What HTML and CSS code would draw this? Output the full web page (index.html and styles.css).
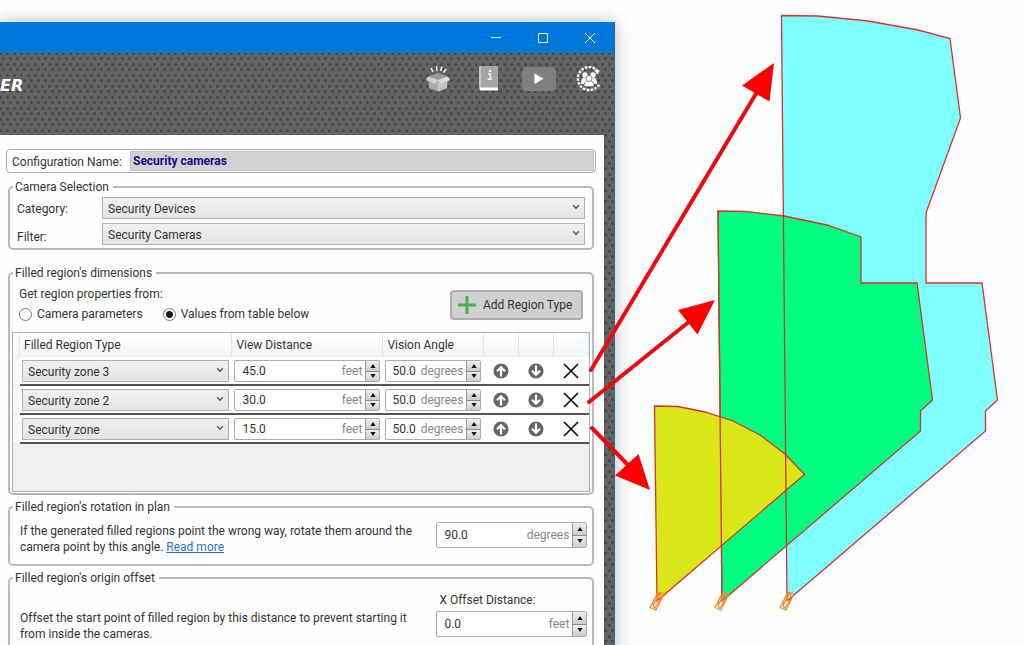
FILE: index.html
```html
<!DOCTYPE html>
<html lang="en">
<head>
<meta charset="utf-8">
<meta name="viewport" content="width=device-width, initial-scale=1">
<title>Security cameras</title>
<link rel="stylesheet" href="styles.css">
</head>
<body>
<svg class="defs" aria-hidden="true">
  <symbol id="chevron" viewBox="0 0 8 6"><path d="M1.2 1.2 4 4.2 6.8 1.2" fill="none" stroke="#555" stroke-width="1.3"/></symbol>
  <symbol id="up" viewBox="0 0 8 6"><path d="M4 1 6.6 5H1.4Z" fill="#111"/></symbol>
  <symbol id="down" viewBox="0 0 8 6"><path d="M4 5 6.6 1H1.4Z" fill="#111"/></symbol>
  <symbol id="move" viewBox="0 0 16 16"><circle cx="8" cy="8" r="7.6" fill="#666"/><path d="M8 13.5V4.5M4 8.3 8 4.3 12 8.3" fill="none" stroke="#fff" stroke-width="2.2"/></symbol>
  <symbol id="cross" viewBox="0 0 16 16"><path d="M1 1 15 15M15 1 1 15" stroke="#111" stroke-width="1.7"/></symbol>
</svg>
<main class="stage">
  <section class="window">
    <header class="titlebar">
      <button aria-label="Minimize"><svg viewBox="0 0 10 10"><path d="M0 4.5H10"/></svg></button>
      <button aria-label="Maximize"><svg viewBox="0 0 10 10"><path d="M.5.5H9.5V9.5H.5Z"/></svg></button>
      <button aria-label="Close"><svg viewBox="0 0 10 10"><path d="M0 0 10 10M10 0 0 10"/></svg></button>
    </header>
    <div class="body">
      <div class="banner">
        <span class="brand">ER</span>
        <nav class="tools">
          <button class="news" aria-label="What's new"><svg width="24" height="26" viewBox="0 0 24 26">
            <path d="M5 2 7 6M10.500 0 11 5M16 .5 14.500 5M20 3 17.500 6.500" stroke="#eee" stroke-width="1.6"/>
            <path d="M2 11 12 8 22 11 21 22 12 25.500 3 22Z" fill="#aaa"/>
            <path d="M12 14V25.500L21 22V12Z" fill="#c4c4c4"/>
            <path d="M12 7 22 10.500 12 14 2 10.500Z" fill="#999"/>
            <path d="M2 10.500 12 14 9 18 0 14Z" fill="#d0d0d0"/><path d="M22 10.500 12 14 15 18 24 14Z" fill="#dadada"/>
          </svg></button>
          <button class="help" aria-label="Help"><svg width="20" height="26" viewBox="0 0 20 26">
            <path d="M2 0H19V25H2Q0 25 0 22V2Q0 0 2 0Z" fill="#a6a6a6"/><path d="M0 2Q0 0 2 0V21H0Z" fill="#c6c6c6"/>
            <path d="M1 21.500H19V24H1Z" fill="#fff"/><circle cx="11" cy="5" r="1.300" fill="#eee"/><path d="M9 8H11.300V13M8.500 13.300H13" fill="none" stroke="#eee" stroke-width="1.500"/>
          </svg></button>
          <button class="video" aria-label="Video"><svg width="34" height="26" viewBox="0 0 34 26">
            <rect y="1" width="34" height="24" rx="5" fill="#808080"/><path d="M12.500 7.500V18L21.500 12.700Z" fill="#fff"/>
          </svg></button>
          <button aria-label="Community"><svg width="26" height="26" viewBox="0 0 26 26">
            <path d="M22 5A11.500 11.500 0 1 0 23.500 18" fill="none" stroke="#fff" stroke-width="2.400" stroke-dasharray="2.600 1.300"/>
            <path d="M18 3.500 24 4.500 21 8.500Z" fill="#fff"/>
            <g fill="#fff"><circle cx="9" cy="9" r="2.700"/><circle cx="17" cy="9" r="2.700"/><path d="M5 18Q5 11 9 11.500L12 14V18ZM21 18Q21 11 17 11.500L14 14V18Z"/></g>
            <g fill="#fff" stroke="#666" stroke-width=".8"><path d="M8 20.500Q8 14.500 13 14.500T18 20.500Z"/><circle cx="13" cy="12.500" r="3"/></g>
          </svg></button>
        </nav>
      </div>
      <form class="panel">
        <div class="config"><label for="cfg">Configuration Name:</label><input id="cfg" value="Security cameras"></div>

        <fieldset class="selection">
          <legend>Camera Selection</legend>
          <label for="cat">Category:</label>
          <span class="pick"><select id="cat"><option>Security Devices</option></select><svg><use href="#chevron"/></svg></span>
          <label for="fil" class="low">Filter:</label>
          <span class="pick"><select id="fil"><option>Security Cameras</option></select><svg><use href="#chevron"/></svg></span>
        </fieldset>

        <fieldset class="dimensions">
          <legend>Filled region's dimensions</legend>
          <div class="source">
            <div>
              <p>Get region properties from:</p>
              <div class="radios">
                <label><input type="radio" name="src">Camera parameters</label>
                <label><input type="radio" name="src" checked>Values from table below</label>
              </div>
            </div>
            <button type="button" class="add"><svg viewBox="0 0 18 18"><path d="M9 0V18M0 9H18" stroke="#4caf50" stroke-width="3"/></svg>Add Region Type</button>
          </div>
          <div class="grid">
            <table>
              <colgroup><col class="c-lead"><col><col class="c-view"><col class="c-angle"><col class="c-icon"><col class="c-icon"><col class="c-icon"></colgroup>
              <thead><tr><th></th><th>Filled Region Type</th><th>View Distance</th><th>Vision Angle</th><th></th><th></th><th></th></tr></thead>
              <tbody>
                <tr><td></td>
                  <td><span class="pick"><select aria-label="Region type 1"><option>Security zone 3</option></select><svg><use href="#chevron"/></svg></span></td>
                  <td><span class="spin"><input aria-label="View distance 1" value="45.0"><span>feet</span><span class="steps"><button type="button" aria-label="Increase"><svg><use href="#up"/></svg></button><button type="button" aria-label="Decrease"><svg><use href="#down"/></svg></button></span></span></td>
                  <td><span class="spin tight"><input aria-label="Vision angle 1" value="50.0"><span>degrees</span><span class="steps"><button type="button" aria-label="Increase"><svg><use href="#up"/></svg></button><button type="button" aria-label="Decrease"><svg><use href="#down"/></svg></button></span></span></td>
                  <td><button type="button" class="act" aria-label="Move up"><svg><use href="#move"/></svg></button></td>
                  <td><button type="button" class="act flip" aria-label="Move down"><svg><use href="#move"/></svg></button></td>
                  <td><button type="button" class="act" aria-label="Delete"><svg><use href="#cross"/></svg></button></td></tr>
                <tr><td></td>
                  <td><span class="pick"><select aria-label="Region type 2"><option>Security zone 2</option></select><svg><use href="#chevron"/></svg></span></td>
                  <td><span class="spin"><input aria-label="View distance 2" value="30.0"><span>feet</span><span class="steps"><button type="button" aria-label="Increase"><svg><use href="#up"/></svg></button><button type="button" aria-label="Decrease"><svg><use href="#down"/></svg></button></span></span></td>
                  <td><span class="spin tight"><input aria-label="Vision angle 2" value="50.0"><span>degrees</span><span class="steps"><button type="button" aria-label="Increase"><svg><use href="#up"/></svg></button><button type="button" aria-label="Decrease"><svg><use href="#down"/></svg></button></span></span></td>
                  <td><button type="button" class="act" aria-label="Move up"><svg><use href="#move"/></svg></button></td>
                  <td><button type="button" class="act flip" aria-label="Move down"><svg><use href="#move"/></svg></button></td>
                  <td><button type="button" class="act" aria-label="Delete"><svg><use href="#cross"/></svg></button></td></tr>
                <tr><td></td>
                  <td><span class="pick"><select aria-label="Region type 3"><option>Security zone</option></select><svg><use href="#chevron"/></svg></span></td>
                  <td><span class="spin"><input aria-label="View distance 3" value="15.0"><span>feet</span><span class="steps"><button type="button" aria-label="Increase"><svg><use href="#up"/></svg></button><button type="button" aria-label="Decrease"><svg><use href="#down"/></svg></button></span></span></td>
                  <td><span class="spin tight"><input aria-label="Vision angle 3" value="50.0"><span>degrees</span><span class="steps"><button type="button" aria-label="Increase"><svg><use href="#up"/></svg></button><button type="button" aria-label="Decrease"><svg><use href="#down"/></svg></button></span></span></td>
                  <td><button type="button" class="act" aria-label="Move up"><svg><use href="#move"/></svg></button></td>
                  <td><button type="button" class="act flip" aria-label="Move down"><svg><use href="#move"/></svg></button></td>
                  <td><button type="button" class="act" aria-label="Delete"><svg><use href="#cross"/></svg></button></td></tr>
              </tbody>
            </table>
          </div>
        </fieldset>

        <fieldset class="rotation">
          <legend>Filled region's rotation in plan</legend>
          <p>If the generated filled regions point the wrong way, rotate them around the camera point by this angle. <a href="#more">Read more</a></p>
          <span class="spin tall"><input aria-label="Rotation" value="90.0"><span>degrees</span><span class="steps"><button type="button" aria-label="Increase"><svg><use href="#up"/></svg></button><button type="button" aria-label="Decrease"><svg><use href="#down"/></svg></button></span></span>
        </fieldset>

        <fieldset class="offset">
          <legend>Filled region's origin offset</legend>
          <p>Offset the start point of filled region by this distance to prevent starting it from inside the cameras.</p>
          <div>
            <label for="xoff">X Offset Distance:</label>
            <span class="spin tall"><input id="xoff" value="0.0"><span>feet</span><span class="steps"><button type="button" aria-label="Increase"><svg><use href="#up"/></svg></button><button type="button" aria-label="Decrease"><svg><use href="#down"/></svg></button></span></span>
          </div>
        </fieldset>
      </form>
    </div>
  </section>

  <svg class="plan" viewBox="0 0 1024 645" preserveAspectRatio="xMinYMin meet" role="img" aria-label="Filled regions in plan">
    <path fill="#80ffff" d="M781.500 15.500 818 16 868 21 918 30 950 38.500 960.500 118 926 213V283H982L997.500 400 985.500 411V431L787 601Z"/>
    <path class="edge" fill="#00ff80" d="M718 211 745 211.500 784 216 827 225 861 237V283H917L932.500 400 920.500 411V431L722 601Z"/>
    <path class="edge" fill="#dbe61a" d="M654.500 406 678 406.500 705 412 733 421 760 435 785 454 804.500 474.500 657 601Z"/>
    <g class="line">
      <path d="M787 601 781.500 15.500 818 16 868 21 918 30 950 38.500 960.500 118 926 213"/>
      <path d="M926 213V283H982L997.500 400 985.500 411V431L787 601"/>
      <path d="M718 211 722 601"/>
    </g>
    <g fill="none" stroke="#f5862a" stroke-width="1.200">
      <path id="cam" d="M658 592 664 594 656 610 650 607.500ZM653 606 659 593 662 597 655 608ZM651 605 657 600 661 601M656 600 661 592"/>
      <use href="#cam" x="65"/><use href="#cam" x="130"/>
    </g>
    <g stroke="#eb0a0f" stroke-width="4" stroke-linecap="round"><path d="M591 370 757 92M589 402 690 321M592 428 628 465"/></g>
    <path fill="#f00" d="M774 63 742 85.500 769.500 101.500ZM715 300 678 310 697.500 334.500ZM650 490 615 475.500 638.500 454Z"/>
  </svg>
</main>
</body>
</html>
```

FILE: styles.css
```css
* { box-sizing: border-box; }
body { margin: 0; background: #fefefe; color: #333; font: 12px/16px Roboto, "Open Sans", sans-serif; }
button, input, select { font: inherit; color: inherit; margin: 0; }
p { margin: 0; }
.defs { display: none; }
.stage { position: relative; min-height: 100vh; height: 100vh; overflow: hidden; padding-top: 22px; }
.window { width: calc(60% + 1px); min-height: 100%; border-right: 1px solid #1670b8; box-shadow: 0 0 16px rgba(0,0,0,.28); }

.titlebar { height: 31px; padding-right: 1px; background: #0078d9; display: flex; justify-content: flex-end; }
.titlebar button { width: 47px; border: 0; background: none; padding: 0; display: grid; place-items: center; }
.titlebar svg { width: 10px; height: 10px; fill: none; stroke: #fff; stroke-width: 1; overflow: visible; }

.body {
  padding-right: 10px;
  background-color: #636363;
  background-image: radial-gradient(circle, #484848 1px, transparent 2px), radial-gradient(circle, #484848 1px, transparent 2px);
  background-size: 7px 11px;
  background-position: 0 0, 4px 6px;
}
.banner { height: 82px; display: flex; justify-content: space-between; }
.brand { margin-top: 24px; font: italic bold 16px/18px "DejaVu Sans", sans-serif; color: #fff; }
.tools { display: flex; align-items: flex-start; padding: 13px 2px 0 0; }
.tools button { border: 0; background: none; padding: 0; display: block; }
.tools .news { margin-right: 29px; }
.tools .help { margin-right: 23px; }
.tools .video { margin-right: 20px; }
.tools svg { display: block; }

.panel { background: #fefefe; padding: 14px 8px 0 6px; min-height: 520px; }
.config { display: flex; align-items: stretch; height: 24px; border: 1px solid #aaa; border-radius: 4px; padding: 1px; }
.config label { width: 122px; padding-left: 4px; line-height: 22px; }
.config input { flex: 1; min-width: 0; border: 1px solid #c0c0c0; background: #d2d2d2; color: #10108a; font-weight: bold; padding: 0 2px; }

fieldset { margin: 0 2px; padding: 0; border: 2px solid #b9b9b9; border-radius: 5px; min-width: 0; }
legend { padding: 0 4px 0 2px; }

.pick { position: relative; display: block; }
.pick select { appearance: none; display: block; width: 100%; height: 22px; border: 1px solid #b0b0b0; border-radius: 0; padding: 1px 20px 0 5px; background: linear-gradient(#f0f0f0, #e4e4e4); }
.pick svg { position: absolute; right: 5px; top: 7px; width: 8px; height: 6px; pointer-events: none; }

.selection { margin-top: 6px; padding: 2px 7px 3px 7px; display: grid; grid-template-columns: 85px 1fr; row-gap: 4px; align-items: center; }
.selection legend { margin-left: -4px; }
.selection label { padding-top: 2px; }
.selection .low { padding-top: 6px; }

.dimensions { margin-top: 15px; padding: 3px 2px 1px; }
.dimensions legend { margin-left: 1px; }
.source { display: flex; justify-content: space-between; padding: 0 7px; height: 48px; line-height: 20px; }
.radios { display: flex; gap: 20px; }
.radios label { display: flex; align-items: center; gap: 5px; }
.radios input { appearance: none; width: 13px; height: 13px; border: 1px solid #777; border-radius: 50%; background: #fff; }
.radios input:checked { background: radial-gradient(circle, #1a1a1a 3px, #fff 4px); }
.add { display: flex; align-items: center; gap: 7px; height: 30px; margin-top: 6px; padding: 0 9px 0 6px; border: 2px solid #adadad; border-radius: 4px; background: #d0d0d0; }
.add svg { width: 18px; height: 18px; }

.grid { border: 1px solid #9fb4c4; background: #efefef; height: 160px; }
table { width: 100%; border-collapse: separate; border-spacing: 0; table-layout: fixed; }
.c-lead { width: 7px; }
.c-view { width: 151px; }
.c-angle { width: 101px; }
.c-icon { width: 35px; }
th { height: 24px; padding: 0 4px; font-weight: normal; text-align: left; white-space: nowrap; background: linear-gradient(#fff, #f2f5f8); border-right: 1px solid #dde4ea; }
td { height: 29px; padding: 2px 3px 1px 2px; background: #fff; border-bottom: 2px solid #555; vertical-align: middle; }
td:first-child { background: #f8f8f8; border-bottom: 1px solid #e4e4e4; padding: 0; }

.spin { display: flex; height: 22px; border: 1px solid #aaa; border-radius: 2px; background: #fff; color: #888; line-height: 21px; }
.spin input { flex: 1; min-width: 0; width: 40px; border: 0; padding: 1px 0 0 7px; background: none; color: #333; }
.spin.tight input { padding-left: 6px; }
.spin > span { padding-right: 3px; }
.spin .steps { display: flex; flex-direction: column; width: 14px; padding: 0; border-left: 1px solid #999; }
.steps button { flex: 1; min-height: 0; padding: 0; border: 0; background: linear-gradient(#eee, #ccc); display: grid; place-items: center; }
.steps button + button { border-top: 1px solid #888; }
.steps svg { width: 8px; height: 6px; }
.spin.tall { width: 151px; height: 26px; line-height: 25px; }
.act { display: block; margin: 0 auto; padding: 0; border: 0; background: none; }
.act svg { display: block; width: 16px; height: 16px; }
.flip { transform: rotate(180deg); }

.rotation, .offset { display: flex; justify-content: space-between; gap: 10px; margin-top: 4px; padding: 7px 5px 9px 10px; }
.rotation legend, .offset legend { margin-left: -7px; }
.rotation p, .offset p { flex: 1; max-width: 406px; }
.rotation p { padding-top: 1px; }
.rotation a { color: #2a72c4; }
.offset { padding-top: 6px; min-height: 90px; }
.offset p { padding-top: 18px; }
.offset label { display: block; padding-left: 3px; margin-bottom: 3px; }

.plan { position: absolute; left: 0; top: 0; width: 100%; pointer-events: none; }
.plan .line, .plan .edge { stroke: #d83030; stroke-width: 1.3; }
.plan .line { fill: none; }
```
